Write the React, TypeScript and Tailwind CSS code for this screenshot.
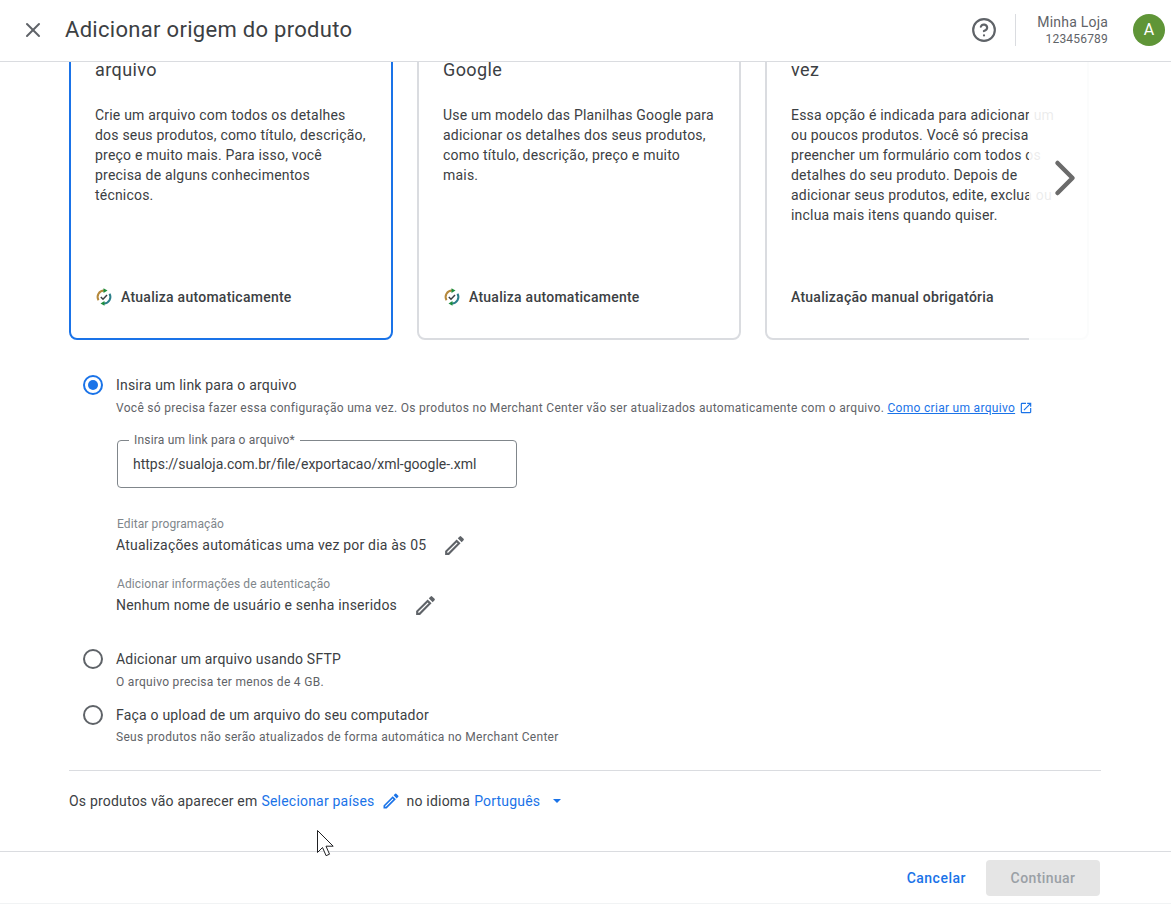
import React from 'react'
import { X, CircleHelp, ChevronRight } from 'lucide-react'

interface OriginCardProps {
  title: string
  lines: string[]
  footer: string
  synced?: boolean
  selected?: boolean
}

const cards: OriginCardProps[] = [
  {
    title: 'arquivo',
    lines: [
      'Crie um arquivo com todos os detalhes',
      'dos seus produtos, como título, descrição,',
      'preço e muito mais. Para isso, você',
      'precisa de alguns conhecimentos',
      'técnicos.',
    ],
    footer: 'Atualiza automaticamente',
    synced: true,
    selected: true,
  },
  {
    title: 'Google',
    lines: [
      'Use um modelo das Planilhas Google para',
      'adicionar os detalhes dos seus produtos,',
      'como título, descrição, preço e muito',
      'mais.',
    ],
    footer: 'Atualiza automaticamente',
    synced: true,
  },
  {
    title: 'vez',
    lines: [
      'Essa opção é indicada para adicionar um',
      'ou poucos produtos. Você só precisa',
      'preencher um formulário com todos os',
      'detalhes do seu produto. Depois de',
      'adicionar seus produtos, edite, exclua ou',
      'inclua mais itens quando quiser.',
    ],
    footer: 'Atualização manual obrigatória',
  },
]

function SyncIcon() {
  return (
    <svg viewBox="0 0 18 18" className="w-[18px] h-[18px] shrink-0" fill="none">
      <path d="M3.5 12.2A6.4 6.4 0 0 1 9 2.6" stroke="#b5893c" strokeWidth="2" />
      <path d="M8.5.2l4 2.4-4 2.4z" fill="#1e8e3e" />
      <path d="M14.5 5.8A6.4 6.4 0 0 1 9 15.4" stroke="#2b7f8a" strokeWidth="2" />
      <path d="M9.5 17.8l-4-2.4 4-2.4z" fill="#1e8e3e" />
      <path d="M5.8 9l2.2 2.2 4-4.2" stroke="#3c4043" strokeWidth="1.5" />
    </svg>
  )
}

function PencilIcon({ className }: { className: string }) {
  return (
    <svg viewBox="0 0 24 24" className={className} fill="currentColor">
      <path d="M3 17.25V21h3.75L17.81 9.94l-3.75-3.75L3 17.25zM5.92 19H5v-.92l9.06-9.06.92.92L5.92 19zM20.71 7.04a1 1 0 0 0 0-1.41l-2.34-2.34a1 1 0 0 0-1.41 0l-1.83 1.83 3.75 3.75 1.83-1.83z" />
    </svg>
  )
}

function OpenInNewIcon() {
  return (
    <svg viewBox="0 0 24 24" className="inline ml-1 -mt-[2px] w-[14px] h-[14px] text-[#1a73e8]" fill="currentColor">
      <path d="M19 19H5V5h7V3H5a2 2 0 0 0-2 2v14a2 2 0 0 0 2 2h14c1.1 0 2-.9 2-2v-7h-2v7zM14 3v2h3.59l-9.83 9.83 1.41 1.41L19 6.41V10h2V3h-7z" />
    </svg>
  )
}

function OriginCard({ title, lines, footer, synced, selected }: OriginCardProps) {
  return (
    <div
      className={`w-[324px] h-[320px] shrink-0 rounded-lg bg-white px-6 flex flex-col border-2 ${
        selected ? 'border-[#1a73e8]' : 'border-[#dadce0]'
      }`}
    >
      <h3 className="mt-[40px] text-[18px] leading-4 tracking-[0.4px] text-[#3c4043]">{title}</h3>
      <div className="mt-[27px] text-sm leading-5 tracking-[0.2px] text-[#3c4043]">
        {lines.map((line) => (
          <p key={line} className="whitespace-nowrap">{line}</p>
        ))}
      </div>
      <div className="mt-auto mb-[31px] flex items-center gap-2 text-sm leading-5 font-medium tracking-[0.25px] text-[#3c4043]">
        {synced && <SyncIcon />}
        <span>{footer}</span>
      </div>
    </div>
  )
}

function Radio({ checked }: { checked?: boolean }) {
  return (
    <span
      className={`w-5 h-5 rounded-full border-2 shrink-0 flex items-center justify-center ${
        checked ? 'border-[#1a73e8]' : 'border-[#5f6368]'
      }`}
    >
      {checked && <span className="w-2.5 h-2.5 rounded-full bg-[#1a73e8]" />}
    </span>
  )
}

export default function App() {
  return (
    <div className="relative w-[1171px] h-[904px] overflow-hidden bg-white flex flex-col font-['Roboto',sans-serif]">
      {/* Header */}
      <header className="h-[62px] shrink-0 border-b border-[#dadce0] flex items-center pb-[2px] pl-[21px] pr-[6px]">
        <X className="w-6 h-6 text-[#5f6368]" strokeWidth={2} />
        <h1 className="ml-5 text-[22px] leading-7 tracking-[0.3px] text-[#3c4043]">Adicionar origem do produto</h1>
        <div className="ml-auto flex items-center">
          <CircleHelp className="w-[26px] h-[26px] text-[#5f6368]" strokeWidth={2} />
          <div className="ml-[18px] h-8 w-px bg-[#dadce0]" />
          <div className="ml-[21px] text-right">
            <p className="text-sm leading-[18px] tracking-[0.2px] text-[#5f6368]">Minha Loja</p>
            <p className="text-xs leading-4 tracking-[0.2px] text-[#5f6368]">123456789</p>
          </div>
          <div className="ml-[25px] w-8 h-8 rounded-full bg-[#5f9537] text-white flex items-center justify-center text-base">
            A
          </div>
        </div>
      </header>

      {/* Scroll area */}
      <main className="relative flex-1 overflow-hidden px-[69px]">
        <div className="-mt-[42px] flex gap-6">
          {cards.map((card) => (
            <OriginCard key={card.title} {...card} />
          ))}
        </div>

        {/* Fade and next arrow over the carousel */}
        <div className="absolute left-[1029px] top-0 w-[64px] h-[280px] bg-white/90">
          <ChevronRight className="ml-[6px] mt-[86px] w-[60px] h-[60px] text-[#6b6b6b]" strokeWidth={1.8} />
        </div>

        <section className="mt-[35px] ml-[14px] text-[#3c4043]">
          <div className="flex gap-[13px]">
            <Radio checked />
            <div>
              <p className="text-sm leading-5 tracking-[0.2px]">Insira um link para o arquivo</p>
              <p className="mt-[5px] text-xs leading-4 tracking-[0.3px] text-[#5f6368] whitespace-nowrap">
                Você só precisa fazer essa configuração uma vez. Os produtos no Merchant Center vão ser atualizados automaticamente com o arquivo.{' '}
                <a className="text-[#1a73e8] underline">Como criar um arquivo</a>
                <OpenInNewIcon />
              </p>

              <fieldset className="mt-[18px] ml-px w-[400px] h-[54px] border border-[#80868b] rounded-[4px] px-[11px]">
                <legend className="px-[5px] text-xs leading-3 tracking-[0.2px] text-[#5f6368]">Insira um link para o arquivo*</legend>
                <p className="pl-[4px] mt-[8px] text-sm leading-5 text-[#3c4043]">https://sualoja.com.br/file/exportacao/xml-google-.xml</p>
              </fieldset>

              <p className="mt-[28px] ml-px text-xs leading-4 tracking-[0.1px] text-[#80868b]">Editar programação</p>
              <div className="mt-px h-6 flex items-center text-sm tracking-[0.2px] text-[#3c4043]">
                <span>Atualizações automáticas uma vez por dia às 05</span>
                <PencilIcon className="ml-[16px] w-[25px] h-[25px] text-[#5f6368]" />
              </div>

              <p className="mt-[19px] ml-px text-xs leading-4 tracking-[0.1px] text-[#80868b]">Adicionar informações de autenticação</p>
              <div className="mt-px h-6 flex items-center text-sm tracking-[0.2px] text-[#3c4043]">
                <span>Nenhum nome de usuário e senha inseridos</span>
                <PencilIcon className="ml-[16px] w-[25px] h-[25px] text-[#5f6368]" />
              </div>
            </div>
          </div>

          <div className="mt-[32px] flex gap-[13px]">
            <Radio />
            <div>
              <p className="text-sm leading-5 tracking-[0.2px]">Adicionar um arquivo usando SFTP</p>
              <p className="mt-[5px] text-xs leading-4 tracking-[0.3px] text-[#5f6368]">O arquivo precisa ter menos de 4 GB.</p>
            </div>
          </div>

          <div className="mt-[15px] flex gap-[13px]">
            <Radio />
            <div>
              <p className="text-sm leading-5 tracking-[0.2px]">Faça o upload de um arquivo do seu computador</p>
              <p className="mt-[4px] text-xs leading-4 tracking-[0.3px] text-[#5f6368]">Seus produtos não serão atualizados de forma automática no Merchant Center</p>
            </div>
          </div>
        </section>

        <div className="mt-[25px] w-[1032px] border-t border-[#dadce0] flex items-center h-[62px] pb-[2px] text-sm tracking-[0.2px] text-[#3c4043]">
          <span>Os produtos vão aparecer em</span>
          <a className="ml-1 text-[#1a73e8]">Selecionar países</a>
          <PencilIcon className="ml-[6px] w-5 h-5 text-[#1a73e8]" />
          <span className="ml-[6px]">no idioma</span>
          <a className="ml-1 text-[#1a73e8]">Português</a>
          <span className="ml-[13px] w-0 h-0 border-x-4 border-x-transparent border-t-4 border-t-[#1a73e8]" />
        </div>
      </main>

      {/* Footer */}
      <footer className="h-[53px] shrink-0 border-t border-b border-t-[#dadce0] border-b-[#f1f3f4] flex items-start justify-end pt-[8px] pr-[71px]">
        <a className="h-9 flex items-center text-sm font-medium tracking-[0.5px] text-[#1a73e8]">Cancelar</a>
        <button className="ml-5 w-[114px] h-9 rounded-[4px] bg-[#e5e5e5] text-sm font-medium tracking-[0.4px] text-[#9aa0a6]">Continuar</button>
      </footer>

      {/* Mouse pointer from the capture */}
      <svg viewBox="0 0 20 30" className="absolute left-[316px] top-[829px] w-[20px] h-[30px]" fill="#ffffff" stroke="#202124" strokeWidth="1">
        <path d="M1.5 1.5v22l5-5 3.6 8.2 3.4-1.5-3.5-8h7.2z" />
      </svg>
    </div>
  )
}
